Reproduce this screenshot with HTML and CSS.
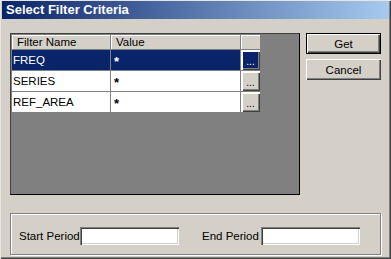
FILE: index.html
```html
<!DOCTYPE html>
<html lang="en">
<head>
    <meta charset="UTF-8">
    <meta name="viewport" content="width=device-width, initial-scale=1.0">
    <title>Select Filter Criteria</title>
    <link rel="stylesheet" href="styles.css">
</head>
<body>
    <div class="window">
        <div class="titlebar">Select Filter Criteria</div>
        <div class="main">
            <div class="grid-panel">
                <div class="grid">
                    <div class="hcell">Filter Name</div>
                    <div class="hcell">Value</div>
                    <div class="hcell"></div>

                    <div class="cell sel">FREQ</div>
                    <div class="cell val sel">*</div>
                    <div class="cell btn-cell"><span class="dots sel-btn">...</span></div>

                    <div class="cell">SERIES</div>
                    <div class="cell val">*</div>
                    <div class="cell btn-cell"><span class="dots">...</span></div>

                    <div class="cell">REF_AREA</div>
                    <div class="cell val">*</div>
                    <div class="cell btn-cell"><span class="dots">...</span></div>
                </div>
            </div>
            <div class="side">
                <button class="default">Get</button>
                <button>Cancel</button>
            </div>
        </div>
        <div class="group">
            <label class="start">Start Period</label>
            <input type="text" class="field">
            <label class="end">End Period</label>
            <input type="text" class="field">
        </div>
    </div>
</body>
</html>
```

FILE: styles.css
```css
body { margin: 0; font-family: "Liberation Sans", Arial, sans-serif; font-size: 11.5px; color: #000; }
.window { width: 391px; height: 259px; box-sizing: border-box; background: #d4d0c8; display: flex; flex-direction: column;
          box-shadow: inset 1px 1px #e8e6e1, inset -1px -1px #404040, inset -2px -2px #808080; }
.titlebar { height: 18px; margin: 1px 2px 0 2px; padding-left: 4px; line-height: 18px; color: #fff; font-weight: bold;
            font-size: 13px; background: linear-gradient(to right, #0a246a, #a6caf0); }
.main { display: flex; padding: 14px 0 0 10px; }
.grid-panel { width: 290px; height: 162px; box-sizing: border-box; background: #808080; border: 1px solid #000;
              border-top-color: #404040; border-left-color: #404040; padding: 1px; }
.grid { display: grid; grid-template-columns: 99px 130px 20px; grid-template-rows: 15px 21px 21px 21px; }
.hcell { background: #d4d0c8; box-sizing: border-box; border-right: 1px solid #808080; border-bottom: 1px solid #808080;
         box-shadow: inset 1px 1px #fff; padding-left: 5px; line-height: 14px; }
.cell { background: #fff; box-sizing: border-box; border-right: 1px solid #808080; border-bottom: 1px solid #808080;
        padding-left: 1px; display: flex; align-items: center; }
.cell.val { padding-left: 3px; font-size: 13px; font-weight: bold; padding-top: 2px; }
.cell.sel { background: #0a246a; color: #fff; }
.btn-cell { padding: 0; background: #fff; justify-content: center; }
.dots { width: 18px; height: 19px; box-sizing: border-box; background: #d4d0c8; display: flex; align-items: flex-end;
        justify-content: center; font-size: 10px; line-height: 13px; padding-bottom: 2px;
        box-shadow: inset 1px 1px #fff, inset -1px -1px #404040, inset -2px -2px #808080; }
.dots.sel-btn { background: #0a246a; color: #fff; }
.side { display: flex; flex-direction: column; gap: 5px; margin-left: 6px; }
button { width: 75px; height: 21px; padding: 0; font-family: inherit; font-size: 11.5px; background: #d4d0c8; border: none;
         box-shadow: inset 1px 1px #fff, inset -1px -1px #404040, inset -2px -2px #808080; }
button.default { border: 1px solid #000; }
.group { margin: 18px 0 0 10px; width: 371px; height: 42px; box-sizing: border-box; border: 1px solid #808080;
         box-shadow: inset 1px 1px #fff, 1px 1px #fff; display: flex; align-items: center; padding: 13px 0 9px 8px; }
.group label { white-space: nowrap; }
.group label.start { width: 60px; margin-right: 1px; }
.group label.end { width: 57px; margin-left: 23px; margin-right: 2px; }
.field { width: 99px; height: 18px; box-sizing: border-box; border: none; background: #fff; margin: 0;
         box-shadow: inset 1px 1px #808080, inset 2px 2px #404040, inset -1px -1px #fff, inset -2px -2px #d4d0c8; }
```
